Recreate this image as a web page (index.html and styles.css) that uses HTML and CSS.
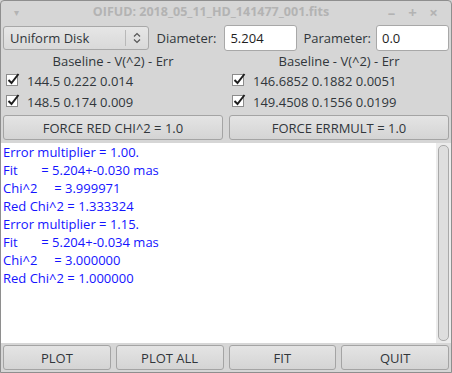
FILE: index.html
```html
<!DOCTYPE html>
<html lang="en">
<head>
    <meta charset="UTF-8">
    <meta name="viewport" content="width=device-width, initial-scale=1.0">
    <title>OIFUD</title>
    <link rel="stylesheet" href="styles.css">
</head>
<body>
    <div class="window">
        <!-- Title bar -->
        <div class="titlebar">
            <span class="menu-arrow">&#9662;</span>
            <span class="title">OIFUD: 2018_05_11_HD_141477_001.fits</span>
            <span class="controls">
                <span>&#8211;</span>
                <span>+</span>
                <span>&#215;</span>
            </span>
        </div>
        <div class="content">
            <!-- Model and parameters -->
            <div class="top-row">
                <div class="combo">
                    <span class="combo-text">Uniform Disk</span>
                    <span class="combo-spin">
                        <svg width="8" height="12" viewBox="0 0 8 12">
                            <path d="M1 4.5 L4 1.5 L7 4.5" fill="none" stroke="#555" stroke-width="1.2"/>
                            <path d="M1 7.5 L4 10.5 L7 7.5" fill="none" stroke="#555" stroke-width="1.2"/>
                        </svg>
                    </span>
                </div>
                <label class="field-label">Diameter:</label>
                <input class="field" type="text" value="5.204">
                <label class="field-label">Parameter:</label>
                <input class="field" type="text" value="0.0">
            </div>
            <!-- Baseline lists -->
            <div class="columns">
                <div class="column">
                    <div class="col-head">Baseline - V(^2) - Err</div>
                    <div class="check">
                        <svg class="box" width="15" height="15" viewBox="0 0 15 15">
                            <rect x="0.5" y="2.5" width="11" height="11" fill="#fff" stroke="#8c8c8c"/>
                            <path d="M2.5 8 L5.5 11 L12.5 2" fill="none" stroke="#1e1e1e" stroke-width="2"/>
                        </svg>144.5 0.222 0.014
                    </div>
                    <div class="check">
                        <svg class="box" width="15" height="15" viewBox="0 0 15 15">
                            <rect x="0.5" y="2.5" width="11" height="11" fill="#fff" stroke="#8c8c8c"/>
                            <path d="M2.5 8 L5.5 11 L12.5 2" fill="none" stroke="#1e1e1e" stroke-width="2"/>
                        </svg>148.5 0.174 0.009
                    </div>
                    <button class="btn">FORCE RED CHI^2 = 1.0</button>
                </div>
                <div class="column">
                    <div class="col-head">Baseline - V(^2) - Err</div>
                    <div class="check">
                        <svg class="box" width="15" height="15" viewBox="0 0 15 15">
                            <rect x="0.5" y="2.5" width="11" height="11" fill="#fff" stroke="#8c8c8c"/>
                            <path d="M2.5 8 L5.5 11 L12.5 2" fill="none" stroke="#1e1e1e" stroke-width="2"/>
                        </svg>146.6852 0.1882 0.0051
                    </div>
                    <div class="check">
                        <svg class="box" width="15" height="15" viewBox="0 0 15 15">
                            <rect x="0.5" y="2.5" width="11" height="11" fill="#fff" stroke="#8c8c8c"/>
                            <path d="M2.5 8 L5.5 11 L12.5 2" fill="none" stroke="#1e1e1e" stroke-width="2"/>
                        </svg>149.4508 0.1556 0.0199
                    </div>
                    <button class="btn">FORCE ERRMULT = 1.0</button>
                </div>
            </div>
        </div>
        <!-- Output log -->
        <div class="log">
<pre class="log-text">Error multiplier = 1.00.
Fit       = 5.204+-0.030 mas
Chi^2     = 3.999971
Red Chi^2 = 1.333324
Error multiplier = 1.15.
Fit       = 5.204+-0.034 mas
Chi^2     = 3.000000
Red Chi^2 = 1.000000</pre>
            <div class="scrollbar"><div class="scroll-track"></div></div>
        </div>
        <!-- Actions -->
        <div class="actions">
            <button class="btn">PLOT</button>
            <button class="btn">PLOT ALL</button>
            <button class="btn">FIT</button>
            <button class="btn">QUIT</button>
        </div>
    </div>
</body>
</html>
```

FILE: styles.css
```css
body {
    margin: 0;
    font-family: 'Open Sans', 'Noto Sans', sans-serif;
    font-size: 13px;
    color: #31363b;
    background: #d6d6d6;
}
.window {
    width: 452px;
    height: 373px;
    box-sizing: border-box;
    border: 1px solid #8e8e8e;
    border-radius: 4px 4px 0 0;
    background: #d6d6d6;
    display: flex;
    flex-direction: column;
    overflow: hidden;
}
.titlebar {
    height: 21px;
    display: flex;
    align-items: center;
    color: #b3b3b3;
}
.menu-arrow {
    width: 30px;
    text-align: center;
    font-size: 10px;
}
.title {
    flex: 1;
    text-align: center;
    font-weight: bold;
    font-size: 12.5px;
    padding-left: 6px;
}
.controls {
    display: flex;
    gap: 8px;
    width: 66px;
    font-size: 15px;
    font-weight: bold;
}
.controls span {
    width: 13px;
    text-align: center;
}
.content {
    padding: 3px 2px 0 2px;
}
.top-row {
    display: flex;
    align-items: center;
    height: 26px;
}
.combo {
    width: 151px;
    height: 24px;
    box-sizing: border-box;
    border: 1px solid #a8a8a8;
    border-radius: 3px;
    background: linear-gradient(#e6e6e6, #d9d9d9);
    display: flex;
    align-items: center;
}
.combo-text {
    flex: 1;
    padding-left: 6px;
}
.combo-spin {
    width: 22px;
    height: 16px;
    border-left: 1px solid #b8b8b8;
    display: flex;
    align-items: center;
    justify-content: center;
}
.field-label {
    margin: 0 8px 0 7px;
}
.field {
    width: 73px;
    height: 26px;
    box-sizing: border-box;
    border: 1px solid #a8a8a8;
    border-radius: 3px;
    background: #fff;
    font: inherit;
    color: #1e1e1e;
    padding: 0 5px;
    outline: none;
}
.field-label + .field + .field-label {
    margin-left: 6px;
    margin-right: 5px;
}
.columns {
    display: grid;
    grid-template-columns: 1fr 1fr;
    gap: 6px;
}
.column {
    display: flex;
    flex-direction: column;
}
.col-head {
    text-align: center;
    height: 19px;
    line-height: 21px;
}
.check {
    height: 21px;
    display: flex;
    align-items: center;
    padding-left: 3px;
}
.box {
    margin: -2px 6px 0 0;
}
.btn {
    height: 25px;
    font: inherit;
    color: #31363b;
    border: 1px solid #a4a4a4;
    border-radius: 3px;
    background: linear-gradient(#e4e4e4, #d4d4d4);
    padding: 0;
}
.column .btn {
    margin-top: 3px;
}
.log {
    flex: 1;
    margin-top: 3px;
    background: #fff;
    display: flex;
}
.log-text {
    flex: 1;
    margin: 0;
    padding: 0 2px;
    font-family: 'Open Sans', 'Noto Sans', sans-serif;
    font-size: 13px;
    line-height: 18px;
    color: #1414ff;
}
.scrollbar {
    width: 15px;
    background: #ececec;
    padding: 2px 0;
    display: flex;
    justify-content: center;
}
.scroll-track {
    width: 9px;
    border: 1px solid #a9a9a9;
    border-radius: 5px;
    background: #dedede;
}
.actions {
    display: grid;
    grid-template-columns: repeat(4, 1fr);
    gap: 5px;
    padding: 2px;
}
```
